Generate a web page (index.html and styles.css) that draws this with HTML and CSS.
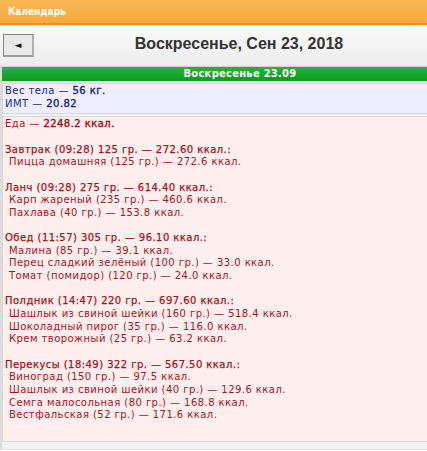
FILE: index.html
```html
<!DOCTYPE html>
<html>
<head>
<meta charset="utf-8">
<link rel="stylesheet" href="styles.css">
</head>
<body>
<div class="page">
  <div class="topbar">Календарь</div>
  <div class="toolbar">
    <button class="back">&#9668;</button>
    <div class="title">Воскресенье, Сен 23, 2018</div>
  </div>
  <div class="content">
    <div class="dayhead">Воскресенье 23.09</div>
    <div class="box weight">
      <div>Вес тела — <b>56 кг.</b></div>
      <div>ИМТ — <b>20.82</b></div>
    </div>
    <div class="box food">
      <div>Еда — <b>2248.2 ккал.</b></div>
      <div class="meal">
        <div class="mh">Завтрак (09:28) 125 гр. — 272.60 ккал.:</div>
        <div class="it">Пицца домашняя (125 гр.) — 272.6 ккал.</div>
      </div>
      <div class="meal">
        <div class="mh">Ланч (09:28) 275 гр. — 614.40 ккал.:</div>
        <div class="it">Карп жареный (235 гр.) — 460.6 ккал.</div>
        <div class="it">Пахлава (40 гр.) — 153.8 ккал.</div>
      </div>
      <div class="meal">
        <div class="mh">Обед (11:57) 305 гр. — 96.10 ккал.:</div>
        <div class="it">Малина (85 гр.) — 39.1 ккал.</div>
        <div class="it">Перец сладкий зелёный (100 гр.) — 33.0 ккал.</div>
        <div class="it">Томат (помидор) (120 гр.) — 24.0 ккал.</div>
      </div>
      <div class="meal">
        <div class="mh">Полдник (14:47) 220 гр. — 697.60 ккал.:</div>
        <div class="it">Шашлык из свиной шейки (160 гр.) — 518.4 ккал.</div>
        <div class="it">Шоколадный пирог (35 гр.) — 116.0 ккал.</div>
        <div class="it">Крем творожный (25 гр.) — 63.2 ккал.</div>
      </div>
      <div class="meal">
        <div class="mh">Перекусы (18:49) 322 гр. — 567.50 ккал.:</div>
        <div class="it">Виноград (150 гр.) — 97.5 ккал.</div>
        <div class="it">Шашлык из свиной шейки (40 гр.) — 129.6 ккал.</div>
        <div class="it">Семга малосольная (80 гр.) — 168.8 ккал.</div>
        <div class="it">Вестфальская (52 гр.) — 171.6 ккал.</div>
      </div>
    </div>
  </div>
</div>
</body>
</html>
```
FILE: styles.css
```css
html, body { margin: 0; padding: 0; background: #fff; overflow: hidden; }
.page { width: 478px; font-family: "DejaVu Sans", sans-serif; font-size: 10px; }
.topbar {
  height: 23px; line-height: 23px; padding-left: 8px;
  background: linear-gradient(#f9b855, #f6a93c);
  border-bottom: 2px solid #e8921c;
  color: #fff; font-weight: bold; font-size: 10px;
  font-family: "DejaVu Sans Condensed", "DejaVu Sans", sans-serif;
}
.toolbar {
  height: 41px; display: flex; align-items: center; padding-left: 3px;
  background: linear-gradient(#fbfbfb, #ececec);
}
.back {
  width: 31px; height: 23px; margin: 0; padding: 0;
  background: #e9e9e9; border: 2px solid #858585; border-right-color: #b0b0b0; border-bottom-color: #9a9a9a;
  border-top-width: 1px; border-left-width: 1px;
  font-size: 9px; color: #111; font-family: "DejaVu Sans", sans-serif;
}
.title {
  flex: 1; text-align: center; font-family: "Liberation Sans", Arial, sans-serif;
  font-weight: bold; font-size: 16px; color: #333; padding-right: 34px; margin-top: -3px;
}
.content { border-left: 2px solid #dcdcdc; background: #f2f2f2; padding-bottom: 7px; border-bottom: 1px solid #e2e2e2; }
.dayhead {
  height: 14px; line-height: 14px; text-align: center; color: #fff; font-weight: bold;
  font-family: "DejaVu Sans Condensed", "DejaVu Sans", sans-serif; font-size: 11px; letter-spacing: 0.3px;
  background: linear-gradient(#22b53a, #0f9a22);
  border-top: 1px solid #cfcfcf;
}
.box { border: 1px solid #d8d8d8; margin-top: 2px; padding: 1px 2px 2px; line-height: 12.65px; letter-spacing: 0.45px; }
.box b { font-weight: normal; -webkit-text-stroke: 0.4px currentColor; }
.weight { background: #eeeeff; color: #1b2b8a; padding-bottom: 3px; }
.food { background: #ffeeee; color: #a3151a; padding-bottom: 19px; }
.meal { margin-top: 12.65px; }
.mh { -webkit-text-stroke: 0.25px currentColor; }
.it { padding-left: 4px; }
```
